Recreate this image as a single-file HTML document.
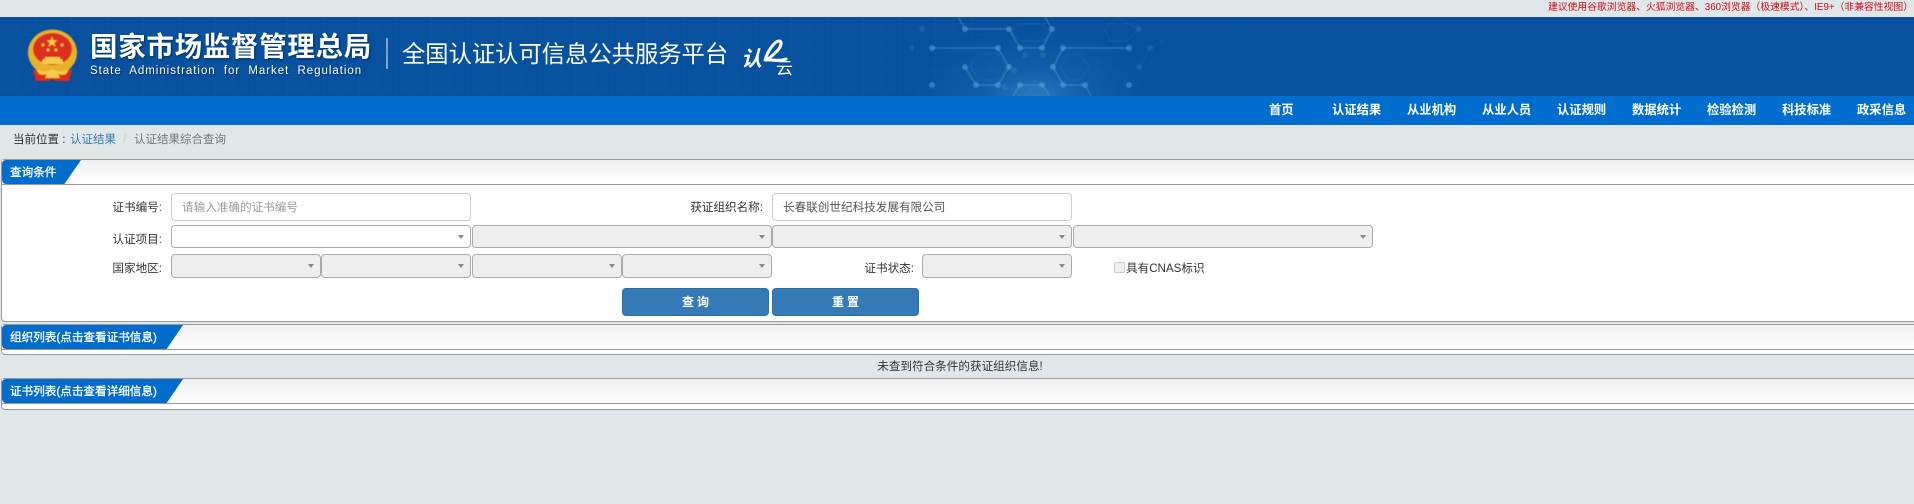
<!DOCTYPE html>
<html lang="zh-CN">
<head>
<meta charset="utf-8">
<title>全国认证认可信息公共服务平台</title>
<style>
html,body{margin:0;padding:0;width:1914px;height:504px;overflow:hidden;background:#e1e6e9;}
body{position:relative;font-family:"Liberation Sans","Noto Sans CJK SC",sans-serif;font-size:11.6px;color:#333;}
.a{position:absolute;white-space:nowrap;}
.nav{position:absolute;top:96px;height:29px;line-height:29px;color:#fff;font-weight:bold;font-size:12.3px;white-space:nowrap;}
.lab{position:absolute;white-space:nowrap;text-align:right;line-height:18px;font-size:11.6px;color:#333;}
.inp{position:absolute;box-sizing:border-box;background:#fff;border:1px solid #ccc;border-radius:4px;height:28px;line-height:28px;padding-left:10px;font-size:11.6px;color:#555;white-space:nowrap;}
.sel{position:absolute;box-sizing:border-box;border:1px solid #aaa;border-radius:4px;background:#eee;}
.sel:after{content:"";position:absolute;right:6px;top:50%;margin-top:-2px;border-left:3px solid transparent;border-right:3px solid transparent;border-top:4px solid #888;}
.sel.w{background:#fff;}
.btn{position:absolute;top:288px;width:147px;height:28px;line-height:27px;background:#337ab7;border:1px solid #2e6da4;box-sizing:border-box;border-radius:4px;color:#fff;font-weight:bold;text-align:center;font-size:12px;word-spacing:0;}
.panel{position:absolute;left:1px;width:1913px;box-sizing:border-box;border:1px solid #999;border-right:0;border-radius:4px 0 0 4px;background:#fff;}
.bar{position:absolute;left:0;top:0;right:0;height:24px;border-bottom:1px solid #999;background:linear-gradient(#efefef,#fff);}
.tab{position:absolute;left:0;top:0;height:24px;background:#006dcc;border-radius:4px 0 0 4px;color:#fff;font-size:11.6px;-webkit-text-stroke:.3px #fff;line-height:25px;padding-left:8px;box-sizing:border-box;white-space:nowrap;}
</style>
</head>
<body>
<div class="a" style="right:1px;top:1px;line-height:14px;font-size:9.800px;color:#c8101a;">建议使用谷歌浏览器、火狐浏览器、360浏览器（极速模式）、IE9+（非兼容性视图）</div>

<svg class="a" style="left:0;top:17px;" width="1914" height="79" viewBox="0 17 1914 79">
<defs>
<pattern id="g" width="18" height="18" patternUnits="userSpaceOnUse" x="0" y="17"><path d="M18 0V18H0" fill="none" stroke="#2a6fb5" stroke-opacity=".2" stroke-width="1"/></pattern>
<linearGradient id="fade" x1="0" x2="1" y1="0" y2="0"><stop offset="0" stop-color="#fff"/><stop offset=".75" stop-color="#fff"/><stop offset="1" stop-color="#000"/></linearGradient>
<mask id="m"><rect x="0" y="17" width="1250" height="79" fill="url(#fade)"/></mask>
<radialGradient id="glow" cx="0.5" cy="0.5" r="0.5"><stop offset="0" stop-color="#3a8ccf" stop-opacity=".75"/><stop offset=".45" stop-color="#2a76bf" stop-opacity=".3"/><stop offset="1" stop-color="#2a76bf" stop-opacity="0"/></radialGradient>
<filter id="b" x="-5%" y="-5%" width="110%" height="110%"><feGaussianBlur stdDeviation=".5"/></filter>
</defs>
<rect x="0" y="17" width="1914" height="79" fill="#07519f"/>
<rect x="0" y="17" width="1250" height="79" fill="url(#g)" mask="url(#m)"/>
<ellipse cx="1035" cy="98" rx="120" ry="68" fill="url(#glow)"/>
<g filter="url(#b)">
<g fill="none" stroke="#62a5da" stroke-opacity=".42" stroke-width="1.4">
<path d="M965 29H1009L1020 48H1042L1052 29L1045 17"/><path d="M958 17L965 29"/>
<path d="M932 48H998L1009 67L998 85H976L965 67"/>
<path d="M1129 48H1063L1053 67L1063 85H1085L1091 96"/>
<path d="M1020 85H1042L1050 96M1020 85L1013 96"/>
</g>
<g fill="none" stroke="#62a5da" stroke-opacity=".12" stroke-width="1">
<path d="M1020 24H1042L1052 36L1042 41H1020L1010 32Z"/><path d="M978 54H998L1006 67L998 80H978L970 67Z"/><path d="M1068 54H1080L1090 67L1080 80H1068L1060 67Z"/><path d="M1117 17L1139 29L1128 41H1110L1105 29Z"/><path d="M1139 67L1150 48L1164 40"/><path d="M1024 96L1031 88H1040L1046 96"/>
</g>
<g fill="#62a5da" fill-opacity=".5">
<circle cx="965" cy="29" r="3"/><circle cx="1009" cy="29" r="3"/><circle cx="1052" cy="29" r="3"/>
<circle cx="932" cy="48" r="3"/><circle cx="998" cy="48" r="3"/><circle cx="1020" cy="48" r="3"/><circle cx="1042" cy="48" r="3"/><circle cx="1063" cy="48" r="3"/><circle cx="1129" cy="48" r="3"/>
<circle cx="965" cy="67" r="3"/><circle cx="1009" cy="67" r="3"/><circle cx="1053" cy="67" r="3"/>
<circle cx="932" cy="85" r="3"/><circle cx="976" cy="85" r="3"/><circle cx="998" cy="85" r="3"/><circle cx="1020" cy="85" r="3"/><circle cx="1042" cy="85" r="3"/><circle cx="1063" cy="85" r="3"/><circle cx="1085" cy="85" r="3"/><circle cx="1129" cy="85" r="3"/>
</g>
<g fill="#62a5da" fill-opacity=".18">
<circle cx="922" cy="29" r="3"/><circle cx="1139" cy="29" r="3"/><circle cx="912" cy="48" r="3"/><circle cx="1150" cy="48" r="3"/><circle cx="1139" cy="67" r="3"/><circle cx="1014" cy="71" r="3"/><circle cx="1025" cy="55" r="3"/><circle cx="1043" cy="55" r="3"/><circle cx="1005" cy="87" r="3"/>
</g>
</g>
<!-- emblem -->
<g filter="url(#b)">
<path d="M33 70L36 81H49L52.500 79L56 81H69L72 70Z" fill="#df2a1e"/>
<ellipse cx="52.500" cy="52.500" rx="24.500" ry="23" fill="#e9b12a"/>
<ellipse cx="52.500" cy="49" rx="19.500" ry="16" fill="#dc2e1e"/>
<path d="M52 36.200l1.400 4h4.200l-3.400 2.500 1.300 4-3.500-2.500-3.500 2.500 1.300-4-3.400-2.500h4.200z" fill="#f7d34a"/>
<g fill="#f7d34a"><circle cx="43" cy="45" r="1.500"/><circle cx="62" cy="45" r="1.500"/><circle cx="48" cy="50" r="1.500"/><circle cx="56" cy="50" r="1.500"/></g>
<path d="M45 57h15v2h2l2 5H41l2-5h2z" fill="#f4cc4a"/>
<path d="M36 69c5 3 11 3 16.500 0c5.500 3 11.500 3 16.500 0l-3 5c-3 1-6 1-8 0l2 4h-15l2-4c-2 1-5 1-8 0z" fill="#f4cc4a"/>
</g>
<!-- logo swoosh -->
<path d="M765 60C768 50 775 41 779 41C783 41 781 48 775 53C771 57 768 59 766 60C772 59 779 62 786 59" fill="none" stroke="#fff" stroke-width="3" stroke-linecap="round" stroke-linejoin="round"/>
</svg>

<div class="a" style="left:90px;top:30px;font-size:27.500px;line-height:34px;font-weight:bold;color:#fff;letter-spacing:.7px;text-shadow:1px 1px 2px #04305f;">国家市场监督管理总局</div>
<div class="a" style="left:90px;top:63px;font-size:11.500px;line-height:16px;color:#fff;letter-spacing:.97px;word-spacing:4px;text-shadow:1px 1px 1px #04305f;">State Administration  for  Market Regulation</div>
<div class="a" style="left:386px;top:38px;width:2px;height:31px;background:#7f9fc6;"></div>
<div class="a" style="left:402px;top:37px;font-size:23.300px;line-height:34px;color:#fff;">全国认证认可信息公共服务平台</div>
<div class="a" style="left:741px;top:46px;font-size:21px;line-height:28px;color:#fff;font-weight:bold;font-style:italic;">认</div>
<div class="a" style="left:776px;top:58px;font-size:17px;line-height:22px;color:#fff;">云</div>

<div class="a" style="left:0;top:96px;width:1914px;height:29px;background:#006dcf;"></div>
<div class="nav" style="left:1269px;">首页</div>
<div class="nav" style="left:1332px;">认证结果</div>
<div class="nav" style="left:1407px;">从业机构</div>
<div class="nav" style="left:1482px;">从业人员</div>
<div class="nav" style="left:1557px;">认证规则</div>
<div class="nav" style="left:1632px;">数据统计</div>
<div class="nav" style="left:1707px;">检验检测</div>
<div class="nav" style="left:1782px;">科技标准</div>
<div class="nav" style="left:1857px;">政采信息</div>

<div class="a" style="left:13px;top:131px;line-height:18px;font-size:11.500px;color:#333;">当前位置 :</div>
<div class="a" style="left:70px;top:131px;line-height:18px;font-size:11.500px;color:#337ab7;">认证结果</div>
<div class="a" style="left:123px;top:131px;line-height:18px;font-size:11.500px;color:#ccc;">/</div>
<div class="a" style="left:134px;top:131px;line-height:18px;font-size:11.500px;color:#777;">认证结果综合查询</div>

<div class="panel" style="top:159px;height:163px;">
<div class="bar"></div>
<div class="tab" style="width:79px;clip-path:polygon(0 0,100% 0,79% 100%,0 100%);">查询条件</div>
</div>
<div class="lab" style="right:1752px;top:199px;">证书编号:</div>
<div class="inp" style="left:171px;top:193px;width:300px;color:#999;">请输入准确的证书编号</div>
<div class="lab" style="right:1151px;top:199px;">获证组织名称:</div>
<div class="inp" style="left:772px;top:193px;width:300px;">长春联创世纪科技发展有限公司</div>

<div class="lab" style="right:1752px;top:231px;">认证项目:</div>
<div class="sel w" style="left:171px;top:225px;width:300px;height:23px;"></div>
<div class="sel" style="left:472px;top:225px;width:300px;height:23px;"></div>
<div class="sel" style="left:772px;top:225px;width:300px;height:23px;"></div>
<div class="sel" style="left:1073px;top:225px;width:300px;height:23px;"></div>

<div class="lab" style="right:1752px;top:260px;">国家地区:</div>
<div class="sel" style="left:171px;top:254px;width:150px;height:24px;"></div>
<div class="sel" style="left:321px;top:254px;width:150px;height:24px;"></div>
<div class="sel" style="left:472px;top:254px;width:150px;height:24px;"></div>
<div class="sel" style="left:622px;top:254px;width:150px;height:24px;"></div>
<div class="lab" style="right:1000px;top:260px;">证书状态:</div>
<div class="sel" style="left:922px;top:254px;width:150px;height:24px;"></div>
<div class="a" style="left:1114px;top:262px;width:11px;height:11px;box-sizing:border-box;border:1px solid #ccc;border-radius:2px;background:#f0f0f0;"></div>
<div class="a" style="left:1126px;top:260px;line-height:18px;color:#333;">具有CNAS标识</div>
<div class="btn" style="left:622px;">查<span style="display:inline-block;width:3px;"></span>询</div>
<div class="btn" style="left:772px;">重<span style="display:inline-block;width:3px;"></span>置</div>

<div class="panel" style="top:324px;height:31px;">
<div class="bar"></div>
<div class="tab" style="width:181px;clip-path:polygon(0 0,100% 0,91% 100%,0 100%);">组织列表(点击查看证书信息)</div>
</div>
<div class="a" style="left:0;width:1920px;top:358px;line-height:18px;text-align:center;color:#333;">未查到符合条件的获证组织信息!</div>
<div class="panel" style="top:378px;height:32px;">
<div class="bar"></div>
<div class="tab" style="width:181px;clip-path:polygon(0 0,100% 0,91% 100%,0 100%);">证书列表(点击查看详细信息)</div>
</div>
</body>
</html>
